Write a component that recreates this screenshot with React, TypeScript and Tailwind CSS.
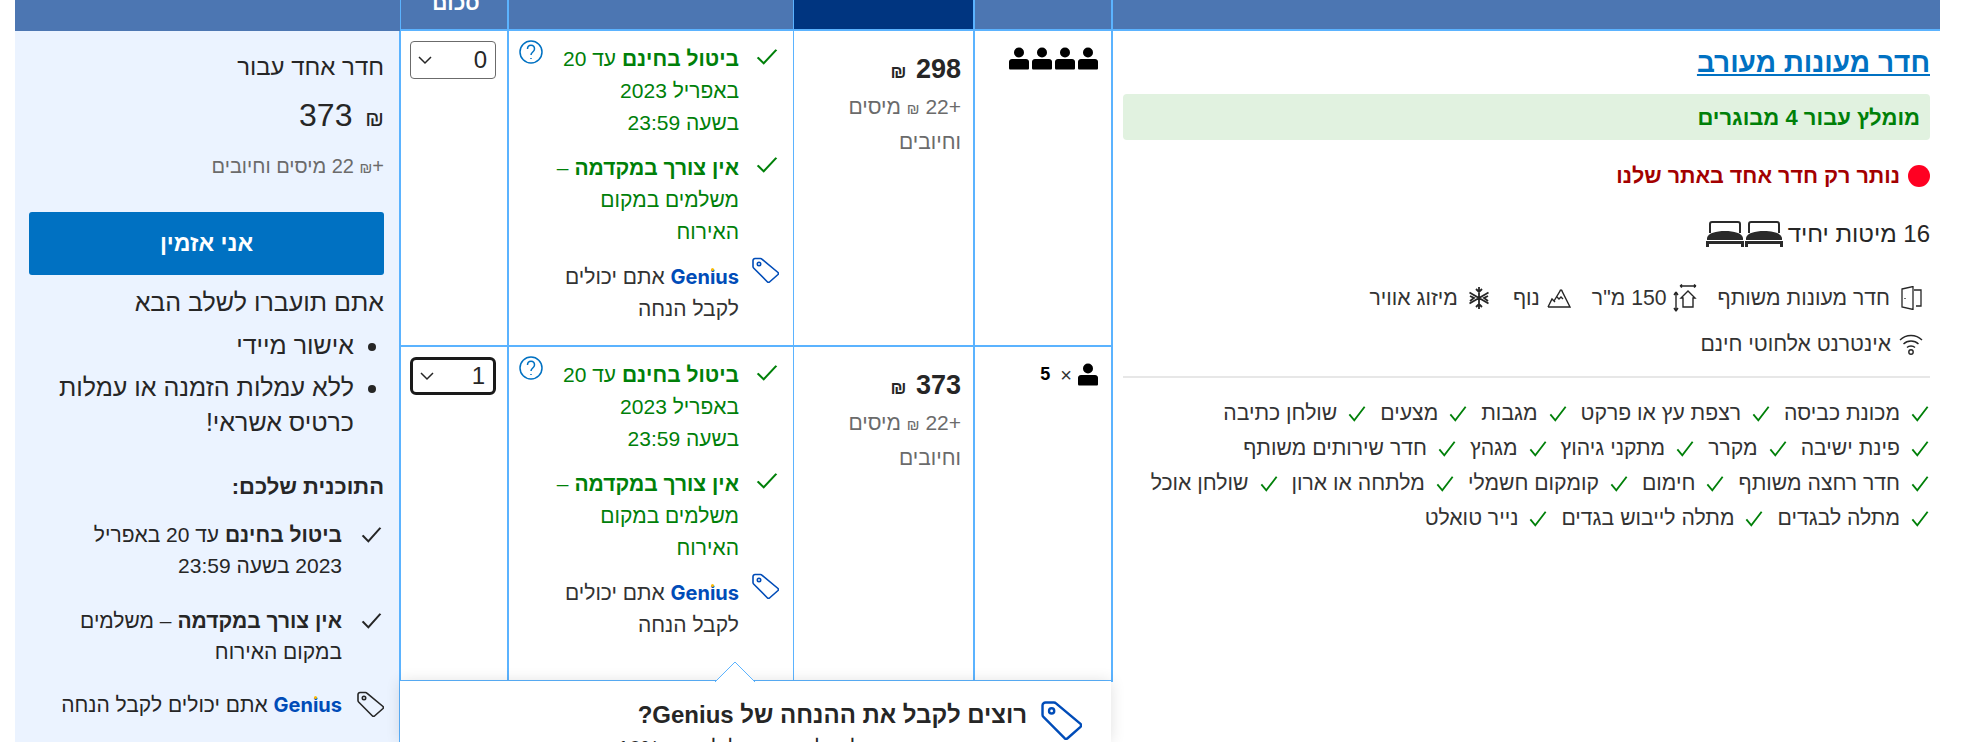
const font = { fontFamily: '"Liberation Sans", "DejaVu Sans", sans-serif' };

const facilities = [
  ['מכונת כביסה', 'רצפת עץ או פרקט', 'מגבות', 'מצעים', 'שולחן כתיבה'],
  ['פינת ישיבה', 'מקרר', 'מתקני גיהוץ', 'מגהץ', 'חדר שירותים משותף'],
  ['חדר רחצה משותף', 'חימום', 'קומקום חשמלי', 'מלתחה או ארון', 'שולחן אוכל'],
  ['מתלה לבגדים', 'מתלה לייבוש בגדים', 'נייר טואלט'],
];

function Check({ className }: { className: string }) {
  return (
    <svg viewBox="0 0 20 20" preserveAspectRatio="none" className={className} fill="none" stroke="currentColor" strokeWidth="2">
      <path d="M1.5 11 7 18 18.5 2" />
    </svg>
  );
}

function TagIcon({ className }: { className: string }) {
  return (
    <svg viewBox="0 0 27 26" className={className} fill="none" stroke="currentColor" strokeWidth="1.6">
      <path d="M3 1.5h5.5a2 2 0 0 1 1.4.6L26 15.5a1.5 1.5 0 0 1 0 2L17.5 25a1.5 1.5 0 0 1-2 0L1.6 11a2 2 0 0 1-.6-1.5V3.5a2 2 0 0 1 2-2z" />
      <circle cx="7" cy="7" r="1.7" />
    </svg>
  );
}

function Person() {
  return (
    <svg viewBox="0 0 20 23" className="w-5 h-[23px]" fill="black">
      <circle cx="10" cy="5.5" r="5" />
      <path d="M0 21v-6c0-1.6 1-3 3-3h14c2 0 3 1.4 3 3v6c0 1-.5 1.500-1.500 1.500H1.500C.5 22.500 0 22 0 21z" />
    </svg>
  );
}

function Bed() {
  return (
    <svg viewBox="0 0 38 26" className="w-[38px] h-[26px]" fill="#2a2a2a">
      <path d="M4 12V3a2 2 0 0 1 2-2h26a2 2 0 0 1 2 2v9" fill="none" stroke="#2a2a2a" strokeWidth="2" />
      <path d="M1 17c1-5 9-7 18-7s17 2 18 7v2H1z" />
      <path d="M0 20h38v6h-3v-3H3v3H0z" />
    </svg>
  );
}

function Genius({ className }: { className: string }) {
  return (
    <span dir="ltr" className={`font-bold leading-none text-[#004cb8] ${className}`} style={{ fontFamily: '"Inter", "Liberation Sans", sans-serif' }}>
      Gen
      <span className="relative">
        i
        <span className="absolute top-[3px] left-[1px] w-[3px] h-[3px] rounded-full bg-[#febb02]" />
      </span>
      us
    </span>
  );
}

function RoomRow({ persons, price, qty, focused }: { persons: number; price: string; qty: string; focused?: boolean }) {
  return (
    <>
      <div className="border-l-2 border-b-2 border-[#5bb3ff] flex justify-start pr-[13px] pt-[16px] gap-[3px] items-start">
        {persons === 4 ? (
          <>
            <Person />
            <Person />
            <Person />
            <Person />
          </>
        ) : (
          <>
            <Person />
            <span className="flex items-center h-[23px] gap-[10px] mr-[3px] text-[18px] text-black">
              <span className="text-[20px] text-[#333]">×</span>
              <b dir="ltr">5</b>
            </span>
          </>
        )}
      </div>
      <div className="border-l border-b-2 border-[#5bb3ff] pr-3 pt-[20px] text-[#6b6b6b] text-[21px] leading-[35px]">
        <div className="text-[27px] leading-[36px] font-bold text-[#262626]">
          {price} <span className="text-[18px] leading-none mr-[2px]">₪</span>
        </div>
        <div className="mt-[2px]">
          +22 <span className="text-[15px] leading-none">₪</span> מיסים
        </div>
        <div>וחיובים</div>
      </div>
      <div className="relative border-l-2 border-b-2 border-[#5bb3ff] pr-[54px] pt-[12px] text-[21px] leading-[32px] text-[#008009]">
        <Check className="absolute right-[15px] top-[17px] w-[22px] h-[17px]" />
        <svg viewBox="0 0 24 24" className="absolute left-[10px] top-[9px] w-6 h-6 text-[#0071c2]" fill="none" stroke="currentColor" strokeWidth="1.500">
          <circle cx="12" cy="12" r="11" />
          <path d="M8.500 9c0-5 7-5 7 0 0 3-3.500 3-3.500 6M12 18v1" />
        </svg>
        <div>
          <b>ביטול בחינם</b> עד 20
          <br />
          באפריל 2023
          <br />
          בשעה 23:59
        </div>
        <Check className="absolute right-[15px] top-[125px] w-[22px] h-[17px]" />
        <div className="mt-[13px]">
          <b>אין צורך במקדמה</b> –
          <br />
          משלמים במקום
          <br />
          האירוח
        </div>
        <TagIcon className="absolute right-[14px] top-[226px] w-[27px] h-[26px] text-[#004cb8]" />
        <div className="mt-[13px] text-[#333]">
          <Genius className="text-[20px]" /> אתם יכולים
          <br />
          לקבל הנחה
        </div>
      </div>
      <div className="border-l border-b-2 border-[#5bb3ff] pr-[11px] pt-[10px]">
        <div
          className={`w-[86px] h-[38px] rounded bg-white flex items-center justify-between pr-2 pl-[6px] text-[24px] text-[#262626] ${
            focused ? 'border-[3px] border-[#1a1a1a] rounded-md' : 'border border-[#6b6b6b]'
          }`}
        >
          <span>{qty}</span>
          <svg viewBox="0 0 16 16" className="w-4 h-4" fill="none" stroke="#262626" strokeWidth="1.500">
            <path d="M2 5l6 6 6-6" />
          </svg>
        </div>
      </div>
    </>
  );
}

export default function App() {
  return (
    <div dir="rtl" style={font} className="w-[1961px] h-[742px] overflow-hidden bg-white pr-[21px] pl-[15px]">
      <div className="grid grid-cols-[829px_138px_180px_286px_107px_385px] grid-rows-[31px_316px_335px_60px]">
        {/* header */}
        <div className="bg-[#4c76b2] border-b-2 border-l-2 border-[#5bb3ff]" />
        <div className="bg-[#4c76b2] border-b-2 border-l-2 border-[#5bb3ff]" />
        <div className="bg-[#003580] border-b-2 border-l border-[#5bb3ff]" />
        <div className="bg-[#4c76b2] border-b-2 border-l-2 border-[#5bb3ff]" />
        <div className="bg-[#4c76b2] border-b-2 border-l border-[#5bb3ff] overflow-hidden flex items-end justify-center pb-[12px] pl-[4px]">
          <span className="text-white font-bold text-[21px] leading-[28px]">סכום</span>
        </div>
        <div className="bg-[#4c76b2]" />

        {/* room description */}
        <div className="row-span-2 row-start-2 col-start-1 border-l-2 border-[#5bb3ff] pr-[10px] pl-[10px] pt-[16px]">
          <a className="block text-[28px] leading-[32px] font-bold text-[#0071c2] underline">חדר מעונות מעורב</a>
          <div className="mt-[15px] h-[46px] rounded-[4px] bg-[#e1f2e0] flex items-center pr-[10px] text-[22px] font-bold text-[#008009]">
            מומלץ עבור 4 מבוגרים
          </div>
          <div className="mt-[22px] flex items-center gap-[8px] text-[21.5px] leading-[28px] font-bold text-[#a30000]">
            <span className="w-[22px] h-[22px] rounded-full bg-[#ff0022]" />
            נותר רק חדר אחד באתר שלנו
          </div>
          <div className="mt-[29px] flex items-center gap-[5px] text-[24px] leading-[30px] text-[#262626]">
            16 מיטות יחיד
            <div className="flex gap-[1px]">
              <Bed />
              <Bed />
            </div>
          </div>
          <div className="mt-[35px] flex items-center text-[21.2px] leading-[26px] text-[#333] pr-[8px]">
            <svg viewBox="0 0 22 24" className="w-[22px] h-6 ml-[10px]" fill="none" stroke="#262626" strokeWidth="1.300">
              <path d="M14 4h7v16h-5M2 3l11-2.500v23L2 21zM5 12v1" />
            </svg>
            חדר מעונות משותף
            <svg viewBox="0 0 24 28" className="w-6 h-7 mr-[20px] ml-[7px]" fill="none" stroke="#262626" strokeWidth="1.400">
              <path d="M7 2h16M7 2l2-1.500M7 2l2 1.500M23 2l-2-1.500M23 2l-2 1.500M15 7l-7 7h2v9h10v-9h2zM3 8v19M3 8 1 11M3 8l2 3M3 27l-2-3M3 27l2-3" />
            </svg>
            150 מ"ר
            <svg viewBox="0 0 24 20" className="w-6 h-5 mr-[21px] ml-[7px]" fill="none" stroke="#262626" strokeWidth="1.400">
              <path d="M1 19h22L15 3a1 1 0 0 0-2 0L7 13M1 19l4-8 3 3M10 9l2 2 2-2 2 2" />
            </svg>
            נוף
            <svg viewBox="0 0 24 24" className="w-6 h-6 mr-[22px] ml-[9px]" fill="none" stroke="#262626" strokeWidth="1.800">
              <path d="M12 1v22M2.500 6.500l19 11M21.500 6.500l-19 11M9 3l3 3 3-3M9 21l3-3 3 3M3 10l4 2-4 3M21 10l-4 2 4 3" />
            </svg>
            מיזוג אוויר
          </div>
          <div className="mt-[19px] flex items-center text-[21.2px] leading-[26px] text-[#333] pr-[7px] gap-[8px]">
            <svg viewBox="0 0 24 24" className="w-6 h-6" fill="none" stroke="#262626" strokeWidth="1.400">
              <path d="M1 8c6-6 16-6 22 0M4.500 12c4-4 11-4 15 0M8 15.500c2-2 6-2 8 0" />
              <circle cx="12" cy="20" r="2.200" />
            </svg>
            אינטרנט אלחוטי חינם
          </div>
          <div className="mt-[19px] border-t-2 border-[#e7e7e7]" />
          <div className="mt-[22px] flex flex-col gap-[9px] text-[21.2px] leading-[26px] text-[#333]">
            {facilities.map((row, i) => (
              <div key={i} className="flex gap-[14px] pr-[1px]">
                {row.map(item => (
                  <span key={item} className="flex items-center gap-[11px]">
                    <Check className="w-[18px] h-[17px] text-[#008009]" />
                    {item}
                  </span>
                ))}
              </div>
            ))}
          </div>
        </div>

        <div className="contents">
          <div className="col-start-2 col-span-4 row-start-2 row-span-2 grid grid-cols-subgrid grid-rows-subgrid">
            <RoomRow persons={4} price="298" qty="0" />
            <RoomRow persons={5} price="373" qty="1" focused />
          </div>
        </div>

        {/* summary sidebar */}
        <div className="col-start-6 row-start-2 row-span-3 bg-[#ebf3ff] border-r border-[#5bb3ff] pr-[15px] pl-[14px] pt-[20px] text-[#262626]">
          <div className="text-[24px] leading-[32px]">חדר אחד עבור</div>
          <div className="mt-[10px] text-[32px] leading-[44px]">
            <span className="text-[22px] leading-none ml-[4px]">₪</span> 373
          </div>
          <div className="mt-[15px] text-[20px] leading-[28px] text-[#6b6b6b]">
            +<span className="text-[15px] leading-none">₪</span> 22 מיסים וחיובים
          </div>
          <button className="block w-[355px] mt-[32px] h-[63px] rounded-[3px] bg-[#0071c2] text-white font-bold text-[23px]">
            אני אזמין
          </button>
          <div className="mt-[11px] text-[25px] leading-[32px]">אתם תועברו לשלב הבא</div>
          <ul className="mt-[10px] text-[25px] leading-[35px] list-disc pr-[30px]">
            <li>אישור מיידי</li>
            <li className="mt-[7px]">
              ללא עמלות הזמנה או עמלות
              <br />
              כרטיס אשראי!
            </li>
          </ul>
          <div className="mt-[33px] text-[22px] leading-[28px] font-bold">התוכנית שלכם:</div>
          <div className="relative mt-[18px] pr-[42px] text-[21px] leading-[31px]">
            <Check className="absolute right-[2px] top-[7px] w-[21px] h-[17px] text-[#262626]" />
            <b>ביטול בחינם</b> עד 20 באפריל
            <br />
            2023 בשעה 23:59
          </div>
          <div className="relative mt-[24px] pr-[42px] text-[21px] leading-[31px]">
            <Check className="absolute right-[2px] top-[7px] w-[21px] h-[17px] text-[#262626]" />
            <b>אין צורך במקדמה</b> – משלמים
            <br />
            במקום האירוח
          </div>
          <div className="relative mt-[22px] pr-[42px] text-[21px] leading-[31px]">
            <TagIcon className="absolute right-0 top-[2px] w-[27px] h-[26px] text-[#262626]" />
            <Genius className="text-[20px]" /> אתם יכולים לקבל הנחה
          </div>
        </div>

        {/* genius popover */}
        <div className="relative col-start-2 col-span-4 row-start-4 -mt-[1px] bg-white shadow-[0_0_14px_rgba(0,0,0,0.12)] pr-[84px] pt-[18px] text-[#262626]">
          <div className="absolute -top-[19px] left-[315px] w-[40px] h-[20px] overflow-hidden">
            <svg viewBox="0 0 40 20" className="w-10 h-5" fill="white" stroke="#5bb3ff">
              <path d="M0 20 20 0l20 20" />
            </svg>
          </div>
          <TagIcon className="absolute right-[29px] top-[19px] w-[41px] h-[40px] text-[#004cb8]" />
          <div className="text-[24px] leading-[32px] font-bold">רוצים לקבל את ההנחה של Genius?</div>
          <div className="mt-[4px] text-[21px] leading-[26px]">הירשמו בחינם כדי לקבל הנחה של לפחות 10%</div>
        </div>
      </div>
    </div>
  );
}
